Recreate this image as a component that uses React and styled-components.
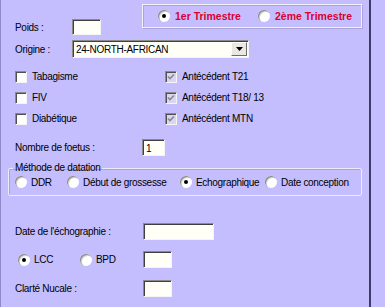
import React from "react";
import styled, { createGlobalStyle } from "styled-components";

const GlobalStyle = createGlobalStyle`
  body {
    margin: 0;
    background: #c4beff;
    font-family: "Liberation Sans", Arial, sans-serif;
    font-size: 10px;
    letter-spacing: -0.3px;
    color: #000;
  }
`;

const Panel = styled.div`
  box-sizing: border-box;
  width: 371px;
  height: 307px;
  padding: 0 7px;
  background: #c4beff;
  border-left: 1px solid #8e89c8;
  border-right: 2px solid #3e3b66;
  display: flex;
  flex-direction: column;
`;

const Header = styled.div`
  display: flex;
  align-items: flex-start;
  height: 35px;
`;

const Row = styled.div`
  display: flex;
  align-items: center;
  margin-left: 7px;
  margin-top: ${(p) => p.$top || 0}px;
  height: ${(p) => p.$h || 17}px;
`;

const Label = styled.span`
  width: ${(p) => p.$w}px;
  flex-shrink: 0;
`;

const TextBox = styled.div`
  box-sizing: border-box;
  width: ${(p) => p.$w}px;
  height: ${(p) => p.$h || 16}px;
  background: #fffff8;
  border-top: 1px solid #8a8a8a;
  border-left: 1px solid #8a8a8a;
  border-bottom: 1px solid #f4f4f4;
  border-right: 1px solid #f4f4f4;
  box-shadow: inset 1px 1px 0 #404040;
  padding: 1px 0 0 3px;
  display: flex;
  align-items: center;
`;

const TrimBox = styled.div`
  box-sizing: border-box;
  margin: 4px 0 0 auto;
  width: 220px;
  height: 24px;
  border: 1px solid #f2f1f8;
  box-shadow: inset 1px 1px 0 #aaa5d6, 1px 1px 0 #aaa5d6;
  display: flex;
  align-items: center;
  padding-left: 15px;
  gap: 0;
`;

const TrimOption = styled.div`
  display: flex;
  align-items: center;
  gap: 5px;
  width: ${(p) => p.$w}px;
  color: #dc0030;
  font-weight: bold;
  font-size: 10.5px;
  letter-spacing: 0;
`;

const Select = styled(TextBox)`
  padding: 1px 1px 1px 3px;
  justify-content: space-between;
`;

const DropButton = styled.div`
  box-sizing: border-box;
  width: 16px;
  height: 14px;
  margin-top: -1px;
  background: #ebe8e2;
  border-top: 1px solid #fff;
  border-left: 1px solid #fff;
  border-right: 1px solid #6c6c6c;
  border-bottom: 1px solid #6c6c6c;
  display: flex;
  align-items: center;
  justify-content: center;
`;

const CheckGrid = styled.div`
  display: grid;
  grid-template-columns: 150px 1fr;
  grid-auto-rows: 21px;
  margin: 8px 0 0 7px;
`;

const CheckItem = styled.label`
  display: flex;
  align-items: center;
  gap: 5px;
`;

const Box = styled.span`
  box-sizing: border-box;
  width: 12px;
  height: 12px;
  background: ${(p) => (p.$disabled ? "#d9d5f2" : "#fff")};
  border-top: 1px solid #8a8a8a;
  border-left: 1px solid #8a8a8a;
  border-bottom: 1px solid #f4f4f4;
  border-right: 1px solid #f4f4f4;
  box-shadow: inset 1px 1px 0 #505050;
  display: flex;
  align-items: center;
  justify-content: center;
`;

const Group = styled.fieldset`
  margin: 6px 0 0 0;
  padding: 1px 4px 6px 4px;
  border: 1px solid #ecebf7;
  box-shadow: inset 1px 1px 0 #a9a4d6;
  border-radius: 2px;
`;

const Legend = styled.legend`
  padding: 0 2px;
  line-height: 12px;
`;

const RadioRow = styled.div`
  display: flex;
  align-items: center;
  height: 14px;
  padding-left: ${(p) => p.$pad || 0}px;
`;

const RadioItem = styled.label`
  display: flex;
  align-items: center;
  gap: 4px;
  width: ${(p) => (p.$w ? `${p.$w}px` : "auto")};
  flex-shrink: 0;
`;

const Dot = styled.span`
  box-sizing: border-box;
  width: 12px;
  height: 12px;
  border-radius: 50%;
  background: #fff;
  box-shadow: inset 1px 1px 0 #8a8a8a, inset 2px 2px 0 #d8d8d8;
  display: flex;
  align-items: center;
  justify-content: center;
  flex-shrink: 0;
  &::after {
    content: "";
    width: 4px;
    height: 4px;
    border-radius: 50%;
    background: ${(p) => (p.$on ? "#000" : "transparent")};
  }
`;

const Check = ({ label, checked, disabled }) => (
  <CheckItem>
    <Box $disabled={disabled}>
      {checked && (
        <svg width="8" height="8" viewBox="0 0 8 8">
          <path d="M1 3.5 L3 5.5 L7 1.5" fill="none" stroke={disabled ? "#8a8a8a" : "#000"} strokeWidth="1.6" />
        </svg>
      )}
    </Box>
    <span>{label}</span>
  </CheckItem>
);

const Radio = ({ label, on, w }) => (
  <RadioItem $w={w}>
    <Dot $on={on} />
    <span>{label}</span>
  </RadioItem>
);

export default function App() {
  return (
    <>
      <GlobalStyle />
      <Panel>
        <Header>
          <Row $top={19} $h={16}>
            <Label $w={57}>Poids :</Label>
            <TextBox $w={29} />
          </Row>
          <TrimBox>
            <TrimOption $w={100}>
              <Dot $on />
              <span>1er Trimestre</span>
            </TrimOption>
            <TrimOption $w={95}>
              <Dot />
              <span>2ème Trimestre</span>
            </TrimOption>
          </TrimBox>
        </Header>

        <Row $top={5} $h={18}>
          <Label $w={57}>Origine :</Label>
          <Select $w={177} $h={18}>
            <span>24-NORTH-AFRICAN</span>
            <DropButton>
              <svg width="7" height="4" viewBox="0 0 7 4">
                <path d="M0 0 H7 L3.5 4 Z" fill="#000" />
              </svg>
            </DropButton>
          </Select>
        </Row>

        <CheckGrid>
          <Check label="Tabagisme" />
          <Check label="Antécédent T21" checked disabled />
          <Check label="FIV" />
          <Check label="Antécédent T18/ 13" checked disabled />
          <Check label="Diabétique" />
          <Check label="Antécédent MTN" checked disabled />
        </CheckGrid>

        <Row $top={10} $h={17}>
          <Label $w={127}>Nombre de foetus :</Label>
          <TextBox $w={23} $h={17}>1</TextBox>
        </Row>

        <Group>
          <Legend>Méthode de datation</Legend>
          <RadioRow $pad={2}>
            <Radio label="DDR" w={52} />
            <Radio label="Début de grossesse" w={113} />
            <Radio label="Echographique" on w={85} />
            <Radio label="Date conception" />
          </RadioRow>
        </Group>

        <Row $top={27} $h={17}>
          <Label $w={128}>Date de l'échographie :</Label>
          <TextBox $w={71} $h={17} />
        </Row>

        <Row $top={11} $h={17}>
          <RadioRow $pad={3}>
            <Radio label="LCC" on w={62} />
            <Radio label="BPD" w={63} />
          </RadioRow>
          <TextBox $w={29} $h={17} />
        </Row>

        <Row $top={12} $h={17}>
          <Label $w={128}>Clarté Nucale :</Label>
          <TextBox $w={29} $h={17} />
        </Row>
      </Panel>
    </>
  );
}
